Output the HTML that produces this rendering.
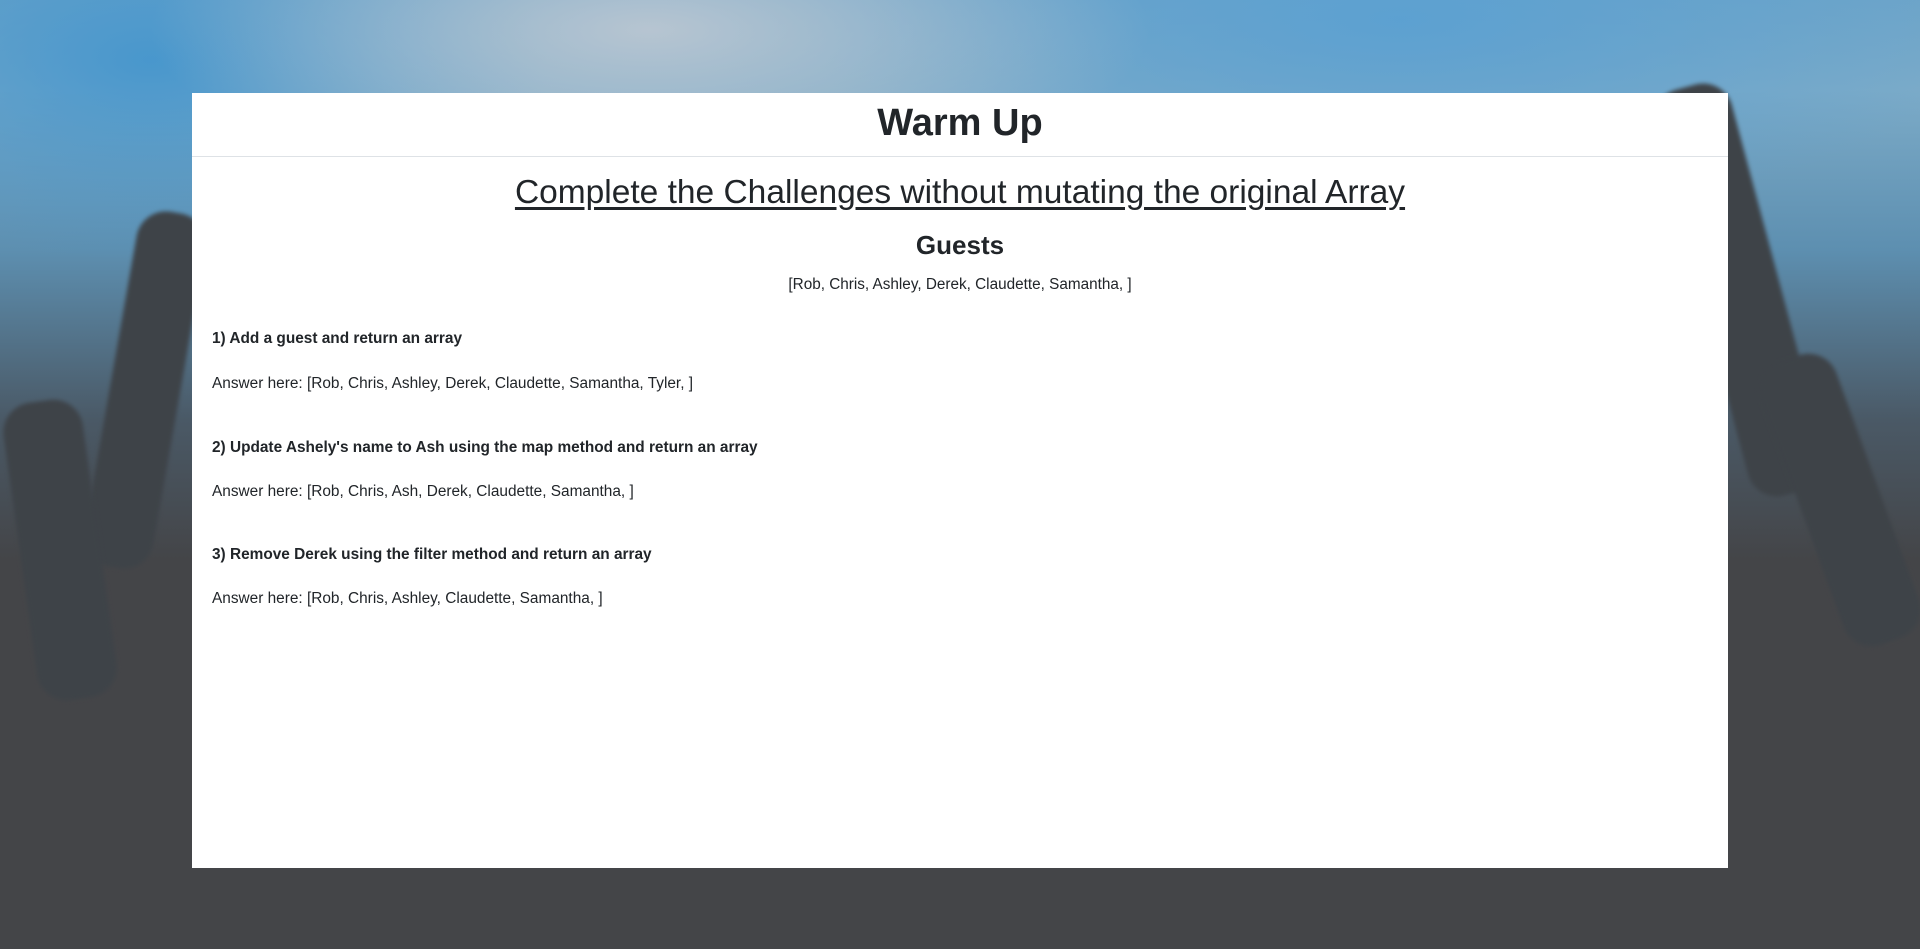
<!DOCTYPE html>
<html><head><meta charset="utf-8"><style>
html,body{margin:0;padding:0;width:1920px;height:949px;overflow:hidden;font-family:"Segoe UI","Liberation Sans",sans-serif;color:#212529}
body{background:#444548;position:relative}
.bg{position:absolute;inset:0;background:
radial-gradient(ellipse 500px 160px at 650px 30px,rgba(190,200,210,.9),transparent),
radial-gradient(ellipse 600px 200px at 1400px 20px,rgba(90,160,210,.9),transparent),
radial-gradient(ellipse 400px 200px at 150px 60px,rgba(70,150,205,.95),transparent),
linear-gradient(180deg,#6fa5c8 0px,#7cabc8 90px,#5d8fb0 250px,#4a5966 420px,#444548 560px,#444548 949px);}
.h{position:absolute;background:#3e4348;border-radius:30px;filter:blur(2px)}
.card{position:absolute;left:192px;top:93px;width:1536px;height:775px;background:#fff}
.hd{height:63px;border-bottom:1px solid #dee2e6;text-align:center;font-size:38px;font-weight:600;line-height:60px}
h2{margin:0;position:absolute;left:0;right:0;top:81px;text-align:center;font-size:33.5px;font-weight:400;text-decoration:underline;text-underline-offset:4px}
h3{margin:0;position:absolute;left:0;right:0;top:137px;text-align:center;font-size:26px;font-weight:600}
.gl{position:absolute;left:0;right:0;top:183px;text-align:center;font-size:15.3px}
.t{position:absolute;left:20px;font-size:15.4px}
.b{font-weight:700}
</style></head><body>
<div class="bg"></div>
<div class="h" style="left:110px;top:210px;width:70px;height:360px;transform:rotate(10deg)"></div>
<div class="h" style="left:20px;top:400px;width:80px;height:300px;transform:rotate(-8deg)"></div>
<div class="h" style="left:1700px;top:80px;width:80px;height:420px;transform:rotate(-15deg)"></div>
<div class="h" style="left:1800px;top:350px;width:80px;height:300px;transform:rotate(-20deg)"></div>
<div class="card">
<div class="hd">Warm Up</div>
<h2>Complete the Challenges without mutating the original Array</h2>
<h3>Guests</h3>
<div class="gl">[Rob, Chris, Ashley, Derek, Claudette, Samantha, ]</div>
<div class="t b" style="top:237px">1) Add a guest and return an array</div>
<div class="t" style="top:282px">Answer here: [Rob, Chris, Ashley, Derek, Claudette, Samantha, Tyler, ]</div>
<div class="t b" style="top:346px">2) Update Ashely's name to Ash using the map method and return an array</div>
<div class="t" style="top:390px">Answer here: [Rob, Chris, Ash, Derek, Claudette, Samantha, ]</div>
<div class="t b" style="top:453px">3) Remove Derek using the filter method and return an array</div>
<div class="t" style="top:497px">Answer here: [Rob, Chris, Ashley, Claudette, Samantha, ]</div>
</div>
</body></html>
